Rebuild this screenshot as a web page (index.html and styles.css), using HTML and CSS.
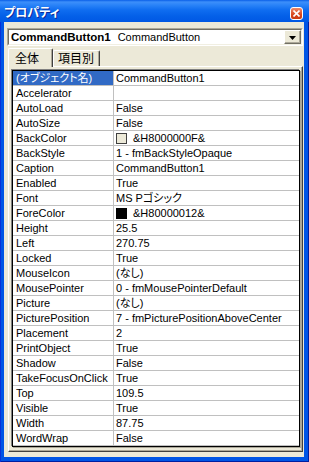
FILE: index.html
```html
<!DOCTYPE html>
<html lang="ja">
<head>
    <meta charset="UTF-8">
    <meta name="viewport" content="width=device-width, initial-scale=1.0">
    <title>プロパティ</title>
    <link rel="stylesheet" href="styles.css">
</head>
<body>
    <div class="window">
        <!-- Title bar -->
        <div class="titlebar">
            <span class="title">プロパティ</span>
            <span class="close">
                <svg width="7" height="7" viewBox="0 0 7 7"><path d="M0.5 0.5 L6.5 6.5 M6.5 0.5 L0.5 6.5" stroke="#fff" stroke-width="1.6" fill="none"/></svg>
            </span>
        </div>

        <div class="client">
            <!-- Object selector -->
            <div class="combo">
                <div class="combo-field">
                    <span class="combo-text"><b class="obj-name">CommandButton1</b>CommandButton</span>
                    <span class="drop">
                        <svg width="7" height="4" viewBox="0 0 7 4"><path d="M0 0 H7 L3.5 4 Z" fill="#000"/></svg>
                    </span>
                </div>
            </div>

            <!-- Tabs -->
            <div class="tabs">
                <div class="tab active">全体</div>
                <div class="tab">項目別</div>
            </div>

            <!-- Property grid -->
            <div class="panel">
                <div class="grid">
                    <div class="row selected"><div class="name">(オブジェクト名)</div><div class="value">CommandButton1</div></div>
                    <div class="row"><div class="name">Accelerator</div><div class="value"></div></div>
                    <div class="row"><div class="name">AutoLoad</div><div class="value">False</div></div>
                    <div class="row"><div class="name">AutoSize</div><div class="value">False</div></div>
                    <div class="row"><div class="name">BackColor</div><div class="value"><span class="swatch back"></span>&amp;H8000000F&amp;</div></div>
                    <div class="row"><div class="name">BackStyle</div><div class="value">1 - fmBackStyleOpaque</div></div>
                    <div class="row"><div class="name">Caption</div><div class="value">CommandButton1</div></div>
                    <div class="row"><div class="name">Enabled</div><div class="value">True</div></div>
                    <div class="row"><div class="name">Font</div><div class="value">MS Pゴシック</div></div>
                    <div class="row"><div class="name">ForeColor</div><div class="value"><span class="swatch fore"></span>&amp;H80000012&amp;</div></div>
                    <div class="row"><div class="name">Height</div><div class="value">25.5</div></div>
                    <div class="row"><div class="name">Left</div><div class="value">270.75</div></div>
                    <div class="row"><div class="name">Locked</div><div class="value">True</div></div>
                    <div class="row"><div class="name">MouseIcon</div><div class="value">(なし)</div></div>
                    <div class="row"><div class="name">MousePointer</div><div class="value">0 - fmMousePointerDefault</div></div>
                    <div class="row"><div class="name">Picture</div><div class="value">(なし)</div></div>
                    <div class="row"><div class="name">PicturePosition</div><div class="value">7 - fmPicturePositionAboveCenter</div></div>
                    <div class="row"><div class="name">Placement</div><div class="value">2</div></div>
                    <div class="row"><div class="name">PrintObject</div><div class="value">True</div></div>
                    <div class="row"><div class="name">Shadow</div><div class="value">False</div></div>
                    <div class="row"><div class="name">TakeFocusOnClick</div><div class="value">True</div></div>
                    <div class="row"><div class="name">Top</div><div class="value">109.5</div></div>
                    <div class="row"><div class="name">Visible</div><div class="value">True</div></div>
                    <div class="row"><div class="name">Width</div><div class="value">87.75</div></div>
                    <div class="row"><div class="name">WordWrap</div><div class="value">False</div></div>
                </div>
            </div>
        </div>
    </div>
</body>
</html>
```

FILE: styles.css
```css
body {
    margin: 0;
    font-family: "Liberation Sans", "Noto Sans CJK JP", sans-serif;
    font-size: 11px;
    font-feature-settings: "palt";
    color: #000;
    background: #ECE9D8;
}
.window {
    width: 309px;
    height: 462px;
    box-sizing: border-box;
    display: flex;
    flex-direction: column;
    background: #0055E5;
    box-shadow: inset 1px 0 0 #0831D9, inset -1px -1px 0 #001EA0;
}
.titlebar {
    height: 22px;
    display: flex;
    justify-content: space-between;
    align-items: flex-start;
    background: linear-gradient(to bottom, #0A5FE8 0, #3D8FFA 2px, #2A83F8 5px, #0F6DF0 10px, #0460E8 16px, #0058E4 22px);
}
.title {
    padding: 5px 0 0 4px;
    line-height: 16px;
    font-size: 12px;
    font-weight: bold;
    color: #fff;
    text-shadow: 1px 1px 0 #0A2A9C;
}
.close {
    width: 11px;
    height: 11px;
    margin: 7px 6px 0 0;
    display: flex;
    align-items: center;
    justify-content: center;
    border: 1px solid #fff;
    border-radius: 3px;
    background: linear-gradient(to bottom, #EE8B6B, #D8461E 60%, #C93A12);
}
.client {
    flex: 1;
    margin: 0 5px 5px 4px;
    background: #ECE9D8;
}
.combo {
    width: 296px;
    height: 18px;
    box-sizing: border-box;
    margin: 6px 0 0 3px;
    border: 1px solid;
    border-color: #ACA899 #fff #fff #ACA899;
}
.combo-field {
    height: 100%;
    box-sizing: border-box;
    border: 1px solid;
    border-color: #716F64 #F1EFE2 #F1EFE2 #716F64;
    background: #fff;
    display: flex;
    align-items: center;
}
.combo-text {
    flex: 1;
    padding-left: 2px;
    line-height: 14px;
    white-space: nowrap;
}
.obj-name {
    font-size: 11.5px;
    margin-right: 7px;
}
.drop {
    width: 17px;
    height: 14px;
    box-sizing: border-box;
    display: flex;
    align-items: center;
    justify-content: center;
    padding-top: 1px;
    background: #ECE9D8;
    border: 1px solid;
    border-color: #fff #716F64 #716F64 #fff;
    box-shadow: inset -1px -1px 0 #ACA899;
}
.tabs {
    display: flex;
    align-items: flex-end;
    height: 18px;
    margin: 2px 0 0 4px;
    position: relative;
    z-index: 1;
}
.tab {
    height: 16px;
    box-sizing: border-box;
    padding: 0 5px 0 4px;
    font-family: "Noto Sans CJK JP", sans-serif;
    font-size: 12px;
    line-height: 14px;
    background: #ECE9D8;
    border: 1px solid;
    border-bottom: none;
    border-color: #fff #404040 #404040 #fff;
    border-radius: 2px 2px 0 0;
    box-shadow: inset -1px 0 0 #ACA899;
}
.tab.active {
    height: 19px;
    width: 45px;
    margin-bottom: -1px;
    padding: 2px 0 0 6px;
}
.panel {
    width: 295px;
    height: 386px;
    box-sizing: border-box;
    margin-left: 4px;
    padding: 3px 2px 4px 3px;
    border: 1px solid;
    border-color: #fff #404040 #404040 #fff;
    box-shadow: inset -1px -1px 0 #ACA899;
}
.grid {
    background: #fff;
    border: 1px solid #000;
    box-shadow: -1px -1px 0 #808080, 1px 1px 0 #ACA899;
}
.row {
    display: flex;
    height: 15px;
    box-sizing: border-box;
    border-bottom: 1px solid #C0C0C0;
    line-height: 14px;
    white-space: nowrap;
}
.name {
    width: 101px;
    flex: none;
    box-sizing: border-box;
    padding-left: 3px;
    border-right: 1px solid #C0C0C0;
    overflow: hidden;
}
.value {
    flex: 1;
    padding-left: 2px;
    display: flex;
    align-items: center;
    overflow: hidden;
}
.selected .name {
    background: #316AC5;
    color: #fff;
}
.swatch {
    width: 9px;
    height: 9px;
    margin-right: 6px;
    flex: none;
}
.swatch.back {
    background: #ECE9D8;
    border: 1px solid #404040;
}
.swatch.fore {
    background: #000;
    border: 1px solid #000;
}
```
